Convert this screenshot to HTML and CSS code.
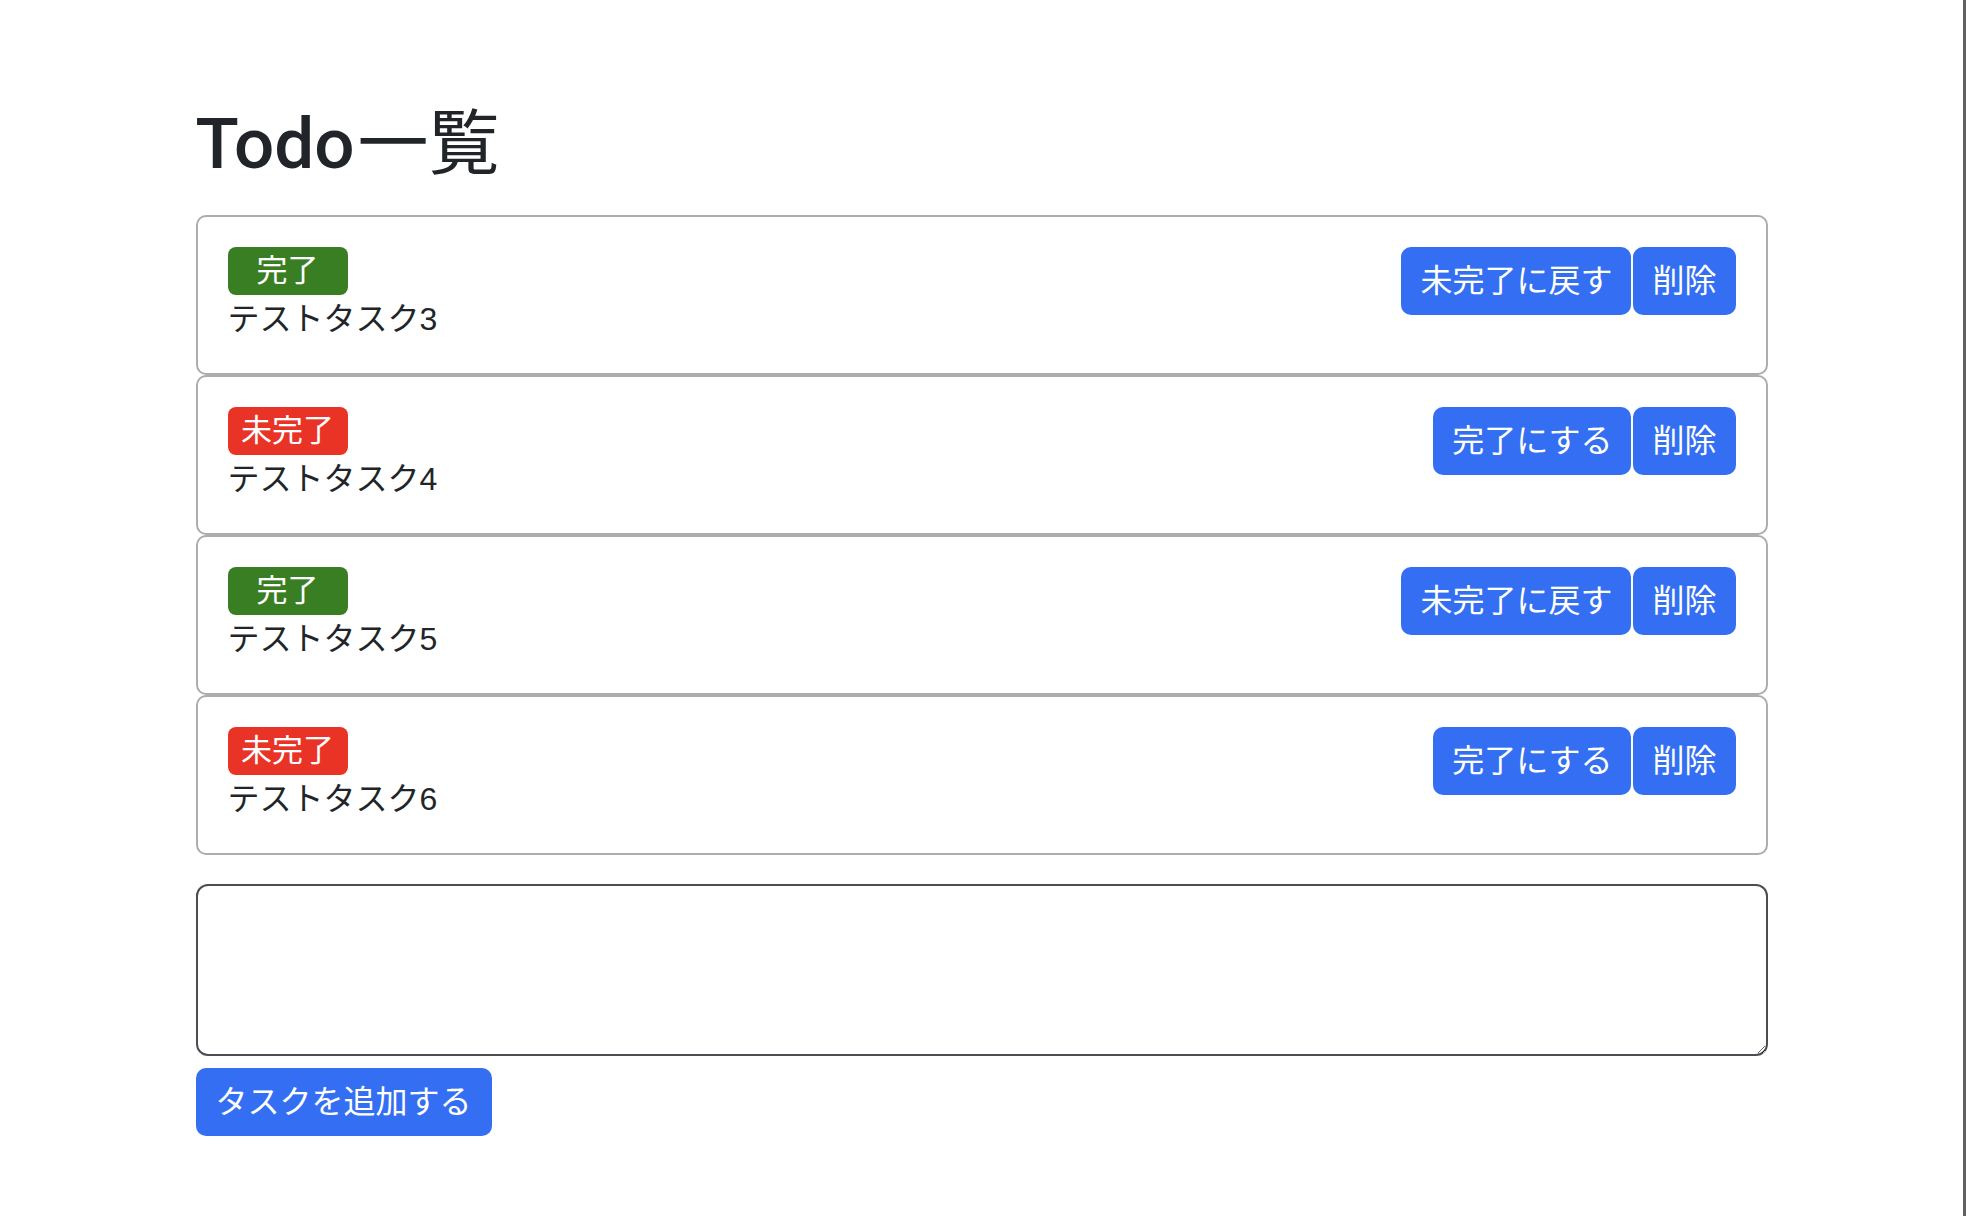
FILE: index.html
```html
<!DOCTYPE html>
<html lang="ja">
<head>
<meta charset="utf-8">
<title>Todo一覧</title>
<link rel="stylesheet" href="styles.css">
</head>
<body>
<main class="container">
  <h1 class="title">Todo<span class="title-ja">一覧</span></h1>
  <ul class="todo-list">
    <li class="todo-card">
      <div class="todo-info">
        <span class="badge badge-done">完了</span>
        <p class="todo-text">テストタスク3</p>
      </div>
      <div class="todo-actions">
        <button class="btn">未完了に戻す</button>
        <button class="btn">削除</button>
      </div>
    </li>
    <li class="todo-card">
      <div class="todo-info">
        <span class="badge badge-undone">未完了</span>
        <p class="todo-text">テストタスク4</p>
      </div>
      <div class="todo-actions">
        <button class="btn">完了にする</button>
        <button class="btn">削除</button>
      </div>
    </li>
    <li class="todo-card">
      <div class="todo-info">
        <span class="badge badge-done">完了</span>
        <p class="todo-text">テストタスク5</p>
      </div>
      <div class="todo-actions">
        <button class="btn">未完了に戻す</button>
        <button class="btn">削除</button>
      </div>
    </li>
    <li class="todo-card">
      <div class="todo-info">
        <span class="badge badge-undone">未完了</span>
        <p class="todo-text">テストタスク6</p>
      </div>
      <div class="todo-actions">
        <button class="btn">完了にする</button>
        <button class="btn">削除</button>
      </div>
    </li>
  </ul>
  <form class="add-form">
    <textarea class="task-input"></textarea>
    <button type="button" class="btn btn-add">タスクを追加する</button>
  </form>
</main>
</body>
</html>
```

FILE: styles.css
```css
* {
  box-sizing: border-box;
}

html, body {
  margin: 0;
  padding: 0;
}

body {
  min-height: 100vh;
  background: #ffffff;
  color: #212529;
  font-family: "Liberation Sans", Arial, "Noto Sans CJK JP", sans-serif;
  font-size: 32px;
  line-height: 48px;
  border-right: 3px solid #606060;
}

.container {
  width: 1572px;
  margin: 0 auto;
  padding-top: 102px;
}

.title {
  margin: 0 0 29px;
  font-family: Roboto, "Liberation Sans", "Noto Sans CJK JP", sans-serif;
  font-size: 71px;
  line-height: 84px;
  font-weight: 500;
  color: #212529;
}

.title-ja {
  font-weight: 400;
  margin-left: 3px;
}

.todo-list {
  list-style: none;
  margin: 0;
  padding: 0;
}

.todo-card {
  display: flex;
  justify-content: space-between;
  align-items: flex-start;
  height: 160px;
  padding: 30px;
  border: 2px solid #adadad;
  border-radius: 10px;
}

.todo-info {
  display: flex;
  flex-direction: column;
  align-items: flex-start;
}

.badge {
  display: block;
  width: 120px;
  height: 48px;
  line-height: 48px;
  text-align: center;
  color: #ffffff;
  border-radius: 8px;
  font-size: 31px;
}

.badge-done {
  background: #3a7e23;
}

.badge-undone {
  background: #e93326;
}

.todo-text {
  margin: 0;
  font-size: 32px;
  line-height: 48px;
}

.todo-actions {
  display: flex;
  gap: 2px;
}

.btn {
  display: block;
  height: 68px;
  padding: 0 19px;
  border: 0;
  border-radius: 10px;
  background: #346ff3;
  color: #ffffff;
  font-family: inherit;
  font-size: 32px;
  line-height: 68px;
  cursor: pointer;
}

.add-form {
  margin-top: 29px;
  display: flex;
  flex-direction: column;
  align-items: flex-start;
  gap: 12px;
}

.task-input {
  display: block;
  width: 100%;
  height: 172px;
  margin: 0;
  border: 2px solid #4a4e53;
  border-radius: 12px;
  font-family: inherit;
  font-size: 32px;
  padding: 8px 12px;
}

.btn-add {
  padding: 0 20px;
}
```
